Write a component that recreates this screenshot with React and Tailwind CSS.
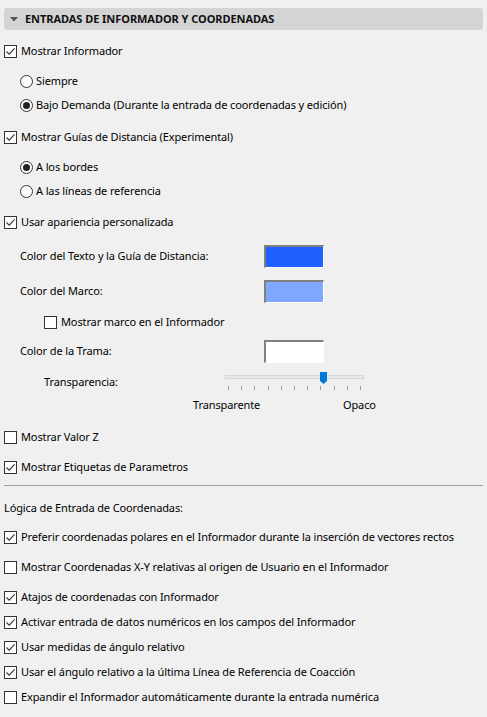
import { useState } from "react";

const font = { fontFamily: '"Noto Sans", "Open Sans", sans-serif' };

const Check = ({ checked, label, mt = "mt-0", indent = "pl-[4px]" }) => (
  <div className={`${mt} ${indent} flex h-[24px] items-center`}>
    <span className="flex h-[13px] w-[13px] shrink-0 items-center justify-center border border-[#333] bg-white">
      {checked && (
        <svg width="11" height="11" viewBox="0 0 11 11">
          <path d="M1.5 5.5 L4.2 8.2 L9.6 2.4" fill="none" stroke="#333" strokeWidth="1.1" />
        </svg>
      )}
    </span>
    <span className="ml-[4px] whitespace-nowrap">{label}</span>
  </div>
);

const Radio = ({ checked, label, mt = "mt-0" }) => (
  <div className={`${mt} flex h-[24px] items-center pl-[20px]`}>
    <span className="flex h-[13px] w-[13px] shrink-0 items-center justify-center rounded-full border border-[#333] bg-white">
      {checked && <span className="h-[7px] w-[7px] rounded-full bg-[#222]" />}
    </span>
    <span className="ml-[3px] whitespace-nowrap">{label}</span>
  </div>
);

const Swatch = ({ label, color, mt }) => (
  <div className={`${mt} flex h-[24px] items-center pl-[20px]`}>
    <span className="w-[244px] whitespace-nowrap">{label}</span>
    <span
      className={`h-[23px] w-[60px] border-t-2 border-l-2 border-b border-r border-t-[#808080] border-l-[#808080] border-b-white border-r-white ${color}`}
    />
  </div>
);

const Slider = () => {
  const ticks = Array.from({ length: 11 }, (_, i) => i);
  return (
    <div className="relative h-[24px] w-[139px]">
      <div className="absolute left-0 right-0 top-[5px] h-[4px] border border-[#d6d6d6] bg-[#e7eaea]" />
      <svg className="absolute left-[95px] top-[2px]" width="7" height="12" viewBox="0 0 7 12">
        <path d="M0 0 H7 V9 L3.5 12 L0 9 Z" fill="#0078d7" />
      </svg>
      <div className="absolute left-[3px] top-[16px] flex w-[133px] justify-between">
        {ticks.map((t) => (
          <span key={t} className="h-[4px] w-px bg-[#a0a0a0]" />
        ))}
      </div>
    </div>
  );
};

export default function App() {
  const [open] = useState(true);
  return (
    <div className="min-h-[717px] w-[487px] bg-[#f0f0f0] text-[11px] tracking-[-0.12px] text-black" style={font}>
      <div className="px-[4px] pt-[8px]">
        <div className="flex h-[22px] items-center rounded-[3px] bg-[#d4d4d4]">
          <svg className="ml-[6px]" width="8" height="5" viewBox="0 0 8 5">
            <path d="M0 0 H8 L4 4.5 Z" fill="#555" />
          </svg>
          <span className="ml-[7px] font-bold tracking-[-0.05px] text-[#111]">ENTRADAS DE INFORMADOR Y COORDENADAS</span>
        </div>
      </div>

      {open && (
        <div className="flex flex-col">
          <Check mt="mt-[9px]" checked label="Mostrar Informador" />
          <Radio mt="mt-[6px]" label="Siempre" />
          <Radio checked label="Bajo Demanda (Durante la entrada de coordenadas y edición)" />
          <Check mt="mt-[8px]" checked label="Mostrar Guías de Distancia (Experimental)" />
          <Radio mt="mt-[6px]" checked label="A los bordes" />
          <Radio label="A las líneas de referencia" />
          <Check mt="mt-[7px]" checked label="Usar apariencia personalizada" />

          <Swatch mt="mt-[10px]" label="Color del Texto y la Guía de Distancia:" color="bg-[#2060ff]" />
          <Swatch mt="mt-[11px]" label="Color del Marco:" color="bg-[#80a8ff]" />
          <Check mt="mt-[7px]" indent="pl-[44px]" label="Mostrar marco en el Informador" />
          <Swatch mt="mt-[5px]" label="Color de la Trama:" color="bg-white" />

          <div className="mt-[7px] flex h-[24px] items-center pl-[44px]">
            <span className="w-[181px]">Transparencia:</span>
            <Slider />
          </div>
          <div className="mt-[1px] flex h-[20px] items-center pl-[193px]">
            <span className="w-[150px]">Transparente</span>
            <span>Opaco</span>
          </div>

          <Check mt="mt-[10px]" label="Mostrar Valor Z" />
          <Check mt="mt-[6px]" checked label="Mostrar Etiquetas de Parametros" />

          <div className="mx-[4px] mt-[6px] h-px bg-[#a0a0a0]" />

          <div className="mt-[10px] flex h-[24px] items-center pl-[4px]">Lógica de Entrada de Coordenadas:</div>
          <Check mt="mt-[5px]" checked label="Preferir coordenadas polares en el Informador durante la inserción de vectores rectos" />
          <Check mt="mt-[6px]" label="Mostrar Coordenadas X-Y relativas al origen de Usuario en el Informador" />
          <Check mt="mt-[6px]" checked label="Atajos de coordenadas con Informador" />
          <Check mt="mt-[1px]" checked label="Activar entrada de datos numéricos en los campos del Informador" />
          <Check mt="mt-[1px]" checked label="Usar medidas de ángulo relativo" />
          <Check mt="mt-[1px]" checked label="Usar el ángulo relativo a la última Línea de Referencia de Coacción" />
          <Check mt="mt-[1px]" label="Expandir el Informador automáticamente durante la entrada numérica" />
        </div>
      )}
    </div>
  );
}
